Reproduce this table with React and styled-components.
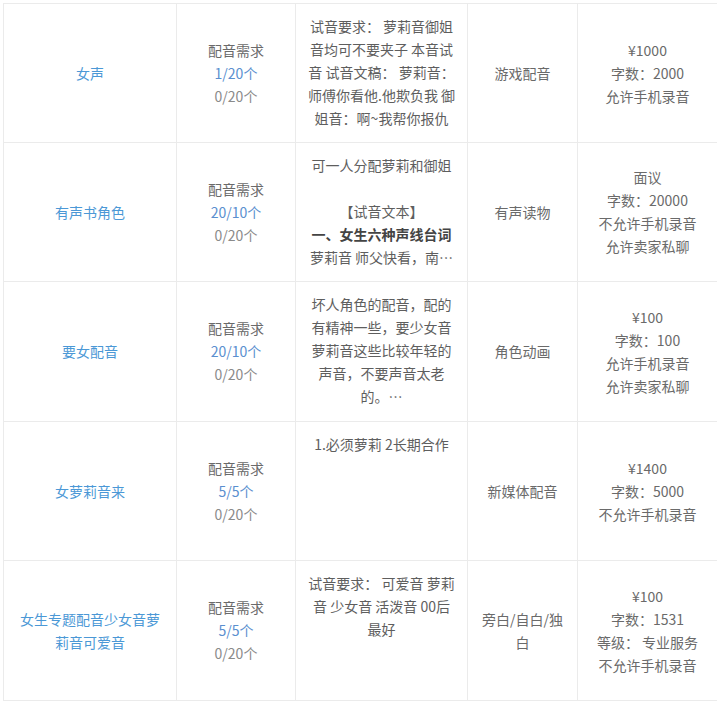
import React from "react";
import styled, { createGlobalStyle } from "styled-components";

const GlobalStyle = createGlobalStyle`
  body {
    margin: 0;
    background: #fff;
    font-family: "Microsoft YaHei", "Noto Sans CJK SC", "Noto Sans", sans-serif;
  }
`;

const Page = styled.div`
  padding: 3px 0 0 3px;
`;

const Grid = styled.div`
  display: grid;
  width: 714px;
  grid-template-columns: 172px 118px 171px 109px 139px;
  grid-template-rows: 138px 138px 139px 138px 139px;
  gap: 1px;
  background: #ebebeb;
  border: 1px solid #ebebeb;
  box-sizing: border-box;
`;

const Cell = styled.div`
  background: #fff;
  display: flex;
  flex-direction: column;
  align-items: center;
  justify-content: ${(p) => (p.$top ? "flex-start" : "center")};
  padding: ${(p) => (p.$top ? "11px 8px 0" : "0 8px")};
  overflow: hidden;
  text-align: center;
  font-size: 14px;
  line-height: 23px;
  color: #6a6a6a;
`;

const Line = styled.div`
  white-space: nowrap;
  min-height: 23px;
  color: ${(p) => p.$color || "inherit"};
  font-weight: ${(p) => (p.$bold ? 700 : 400)};
`;

const BLUE = "#4b98d6";
const BLUE2 = "#5a8fcf";

const rows = [
  {
    title: ["女声"],
    need: "1/20个",
    desc: [
      "试音要求： 萝莉音御姐",
      "音均可不要夹子 本音试",
      "音 试音文稿： 萝莉音：",
      "师傅你看他.他欺负我 御",
      "姐音：啊~我帮你报仇",
    ],
    type: ["游戏配音"],
    info: ["¥1000", "字数：2000", "允许手机录音"],
  },
  {
    title: ["有声书角色"],
    need: "20/10个",
    desc: [
      "可一人分配萝莉和御姐",
      "",
      "【试音文本】",
      { text: "一、女生六种声线台词", strong: true },
      "萝莉音 师父快看，南…",
    ],
    type: ["有声读物"],
    info: ["面议", "字数：20000", "不允许手机录音", "允许卖家私聊"],
  },
  {
    title: ["要女配音"],
    need: "20/10个",
    desc: [
      "坏人角色的配音，配的",
      "有精神一些，要少女音",
      "萝莉音这些比较年轻的",
      "声音，不要声音太老",
      "的。…",
    ],
    type: ["角色动画"],
    info: ["¥100", "字数：100", "允许手机录音", "允许卖家私聊"],
  },
  {
    title: ["女萝莉音来"],
    need: "5/5个",
    desc: ["1.必须萝莉 2长期合作"],
    type: ["新媒体配音"],
    info: ["¥1400", "字数：5000", "不允许手机录音"],
  },
  {
    title: ["女生专题配音少女音萝", "莉音可爱音"],
    need: "5/5个",
    desc: ["试音要求： 可爱音 萝莉", "音 少女音 活泼音 00后", "最好"],
    type: ["旁白/自白/独", "白"],
    info: ["¥100", "字数：1531", "等级： 专业服务", "不允许手机录音"],
  },
];

const Lines = ({ items, color }) =>
  items.map((item, i) => {
    const isText = typeof item === "string";
    return (
      <Line
        key={i}
        $color={!isText && item.strong ? "#444" : color}
        $bold={!isText && item.strong}
      >
        {isText ? item : item.text}
      </Line>
    );
  });

export default function App() {
  return (
    <Page>
      <GlobalStyle />
      <Grid>
        {rows.map((row, i) => (
          <React.Fragment key={i}>
            <Cell>
              <Lines items={row.title} color={BLUE} />
            </Cell>
            <Cell>
              <Line>配音需求</Line>
              <Line $color={BLUE2}>{row.need}</Line>
              <Line $color="#8a8a8a">0/20个</Line>
            </Cell>
            <Cell $top>
              <Lines items={row.desc} color="#5e5e5e" />
            </Cell>
            <Cell>
              <Lines items={row.type} />
            </Cell>
            <Cell>
              <Lines items={row.info} />
            </Cell>
          </React.Fragment>
        ))}
      </Grid>
    </Page>
  );
}
